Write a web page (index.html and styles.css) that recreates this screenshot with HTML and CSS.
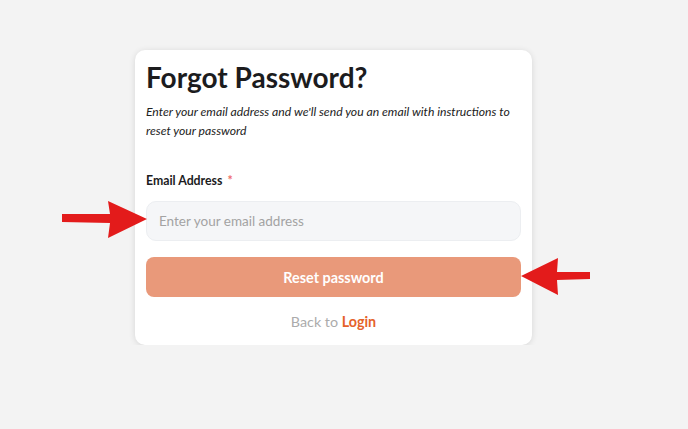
FILE: index.html
```html
<!DOCTYPE html>
<html lang="en">
<head>
  <meta charset="UTF-8" />
  <meta name="viewport" content="width=device-width, initial-scale=1.0"/>
  <title>Forgot Password</title>
  <link rel="stylesheet" href="styles.css">
</head>
<body>

  <div class="card">
    <h1>Forgot Password?</h1>
    <p class="intro">Enter your email address and we'll send you an email with instructions to reset your password</p>

    <label class="label" for="email">Email Address <span class="req">*</span></label>
    <div class="field">
      <input id="email" type="email" placeholder="Enter your email address">
      <svg class="arrow arrow-left" width="86" height="40" viewBox="0 0 86 40">
        <polygon points="0,14 48,14 46,1 85,19 46,38 48,23 0,22" fill="#e31b1b"/>
      </svg>
    </div>

    <div class="field">
      <button class="reset-btn">Reset password</button>
      <svg class="arrow arrow-right" width="70" height="40" viewBox="0 0 70 40">
        <polygon points="0,19 37,1 36,15 69,15 69,22 36,23 37,38" fill="#e31b1b"/>
      </svg>
    </div>

    <div class="back">Back to <a href="#">Login</a></div>
  </div>

</body>
</html>
```

FILE: styles.css
```css
body {
  margin: 0;
  background-color: #f3f3f3;
  font-family: Lato, 'Open Sans', sans-serif;
  color: #1c1c1e;
  padding: 50px 0 0 135px;
}

.card {
  width: 375px;
  background-color: #ffffff;
  border-radius: 10px;
  padding: 10px 11px 13px;
  box-shadow: 0 1px 6px rgba(0,0,0,0.12);
}

h1 {
  font-size: 28px;
  line-height: 34px;
  font-weight: 700;
  margin: 0;
}

.intro {
  font-style: italic;
  font-size: 12.2px;
  line-height: 19px;
  margin: 8px 0 0;
  color: #222;
}

.label {
  display: block;
  font-size: 12.3px;
  line-height: 18px;
  font-weight: 700;
  margin-top: 32px;
}

.req {
  color: #ef6b6b;
  margin-left: 2px;
}

.field {
  position: relative;
}

input {
  display: block;
  box-sizing: border-box;
  width: 100%;
  height: 40px;
  margin-top: 11px;
  padding: 0 12px;
  border: 1px solid #eceef1;
  border-radius: 10px;
  background-color: #f5f6f8;
  font-family: inherit;
  font-size: 13.5px;
  outline: none;
}

input::placeholder {
  color: #a3a3a3;
}

.reset-btn {
  display: block;
  width: 100%;
  height: 40px;
  margin-top: 16px;
  border: none;
  border-radius: 8px;
  background-color: #e9997a;
  color: #ffffff;
  font-family: inherit;
  font-size: 14.4px;
  font-weight: 700;
  cursor: pointer;
}

.back {
  margin-top: 15px;
  text-align: center;
  font-size: 14.3px;
  line-height: 20px;
  color: #ababab;
}

.back a {
  color: #e5622a;
  font-weight: 700;
  text-decoration: none;
}

.arrow {
  position: absolute;
}

.arrow-left {
  left: -84px;
  top: -1px;
}

.arrow-right {
  right: -70px;
  top: 0;
}
```
